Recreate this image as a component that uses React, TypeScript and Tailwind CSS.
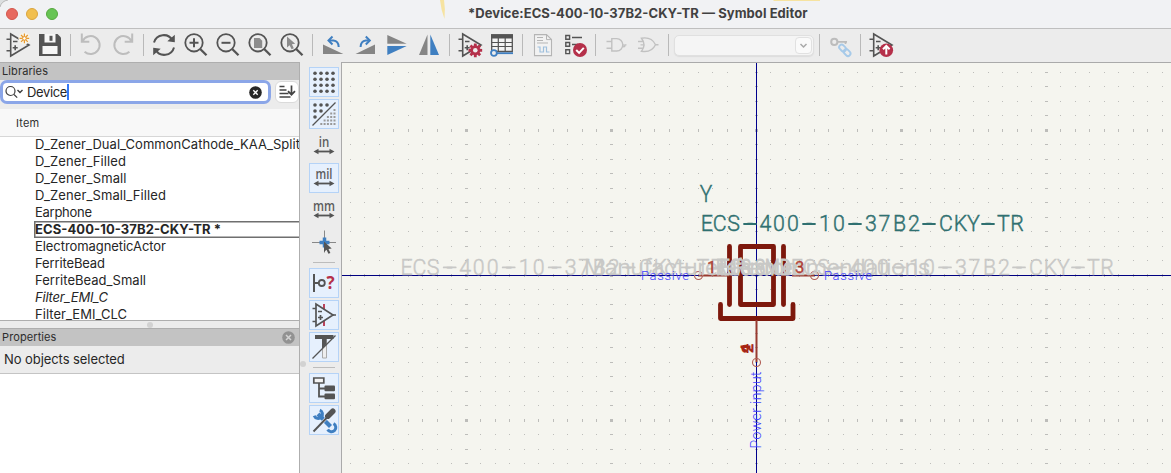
import React from "react";

type Kids = { children?: React.ReactNode };

const DARK = "#545454";
const BLUE = "#3f7fc1";
const RED = "#b5304a";
const UI = "font-['Inter','Liberation_Sans',sans-serif]";

function Tool({ children }: Kids) {
  return (
    <svg className="h-8 w-8 shrink-0" viewBox="0 0 32 32" fill="none">
      {children}
    </svg>
  );
}

function Sep() {
  return (
    <div className="flex w-[9px] shrink-0 justify-center">
      <div className="h-[22px] w-px bg-[#b9b9b9]" />
    </div>
  );
}

function OpAmp() {
  return (
    <g stroke={DARK} strokeWidth="1.6">
      <path d="M8.7 5v22L27 16Z" />
      <path d="M4.5 10.3h4M4.5 21.7h4M11 12.5h4.5M10.7 18.7h5M13.2 16.2v5" />
    </g>
  );
}

function Magnifier({ children }: Kids) {
  return (
    <Tool>
      {children}
      <circle cx="14" cy="13.8" r="8.7" stroke={DARK} strokeWidth="1.8" />
      <path d="M20.2 20l6.3 6.3" stroke={DARK} strokeWidth="2.3" />
    </Tool>
  );
}

function gearPath(cx: number, cy: number) {
  const pts: string[] = [];
  for (let i = 0; i < 8; i++) {
    const a = (i * Math.PI) / 4;
    [[-0.3, 5], [-0.2, 7], [0.2, 7], [0.3, 5]].forEach(([d, r]) =>
      pts.push(`${(cx + r * Math.cos(a + d)).toFixed(2)},${(cy + r * Math.sin(a + d)).toFixed(2)}`)
    );
  }
  return "M" + pts.join("L") + "Z";
}

function Toolbar() {
  return (
    <div className="flex h-[33px] items-start pl-[2px]">
      <div className="flex h-8 items-center">
        <Tool>
          <OpAmp />
          <circle cx="22.4" cy="9.4" r="6" fill="#f6f3ea" />
          <path d="M22.4 4.6v9.6M17.6 9.4h9.6M19 6l6.8 6.8M25.8 6L19 12.8" stroke="#e89a2e" strokeWidth="1.2" />
          <circle cx="22.4" cy="9.4" r="1.8" fill="#fff" stroke="#e89a2e" />
        </Tool>
        <Tool>
          <path d="M5 5h18.5L27 8.500V27H5Z" fill={DARK} />
          <path d="M10.500 5h11v8.500h-11ZM8.500 17h15v8h-15Z" fill="#f6f6f6" />
          <path d="M15.500 6.800h3v5h-3Z" fill={DARK} />
        </Tool>
        <Sep />
        <Tool>
          <path d="M6.800 4.500v8.200h7.500M7.500 12.200A9 9 0 1 1 9.600 22.700" stroke="#bdbdbd" strokeWidth="2" />
        </Tool>
        <Tool>
          <path d="M25.200 4.500v8.200h-7.500M24.500 12.200A9 9 0 1 0 22.400 22.700" stroke="#bdbdbd" strokeWidth="2" />
        </Tool>
        <Sep />
        <Tool>
          <path d="M6 13.500A10 10 0 0 1 24.500 11.500M26 18.500A10 10 0 0 1 7.500 20.500" stroke={DARK} strokeWidth="2" />
          <path d="M26.800 5.800v7.500l-7.500-1ZM5.200 26.200v-7.500l7.500 1Z" fill={DARK} />
        </Tool>
        <Magnifier>
          <path d="M9.500 13.800h9M14 9.300v9" stroke={DARK} strokeWidth="2" />
        </Magnifier>
        <Magnifier>
          <path d="M9.500 13.800h9" stroke={DARK} strokeWidth="2" />
        </Magnifier>
        <Magnifier>
          <path d="M10 9h5.500l2.700 2.700V19H10Z" fill="#8c8c8c" />
        </Magnifier>
        <Magnifier>
          <path d="M11 7.500v11l2.600-2.300 2 4 2.200-1-1.900-3.900 3.300-.5Z" fill="#8c8c8c" />
        </Magnifier>
        <Sep />
        <Tool>
          <path d="M6 15.500V25h20.300Z" fill="#858585" />
          <path d="M12.500 11.500h4q5 .5 5.200 6.500" stroke={BLUE} strokeWidth="2" />
          <path d="M15.500 7.500l-4 4 4 4" stroke={BLUE} strokeWidth="2" />
        </Tool>
        <Tool>
          <path d="M26 15.500V25H6.500Z" fill="#858585" />
          <path d="M19.800 11.500h-3q-5 .5-5.200 6.500" stroke={BLUE} strokeWidth="2" />
          <path d="M16.800 7.500l4 4-4 4" stroke={BLUE} strokeWidth="2" />
        </Tool>
        <Tool>
          <path d="M6.300 6v8.700h19.400Z" fill="#858585" />
          <path d="M6.300 17h19.400L6.300 26Z" fill={BLUE} />
        </Tool>
        <Tool>
          <path d="M14.500 5.500V26H6Z" fill="#858585" />
          <path d="M17.300 5.500V26H26Z" fill={BLUE} />
        </Tool>
        <Sep />
        <Tool>
          <OpAmp />
          <path d={gearPath(21.3, 21.3)} fill={RED} />
          <circle cx="21.3" cy="21.3" r="2.300" fill="#ececec" />
        </Tool>
        <Tool>
          <path d="M5.700 6h20.600v16.500H5.700Z" fill="#f4f4f4" stroke={DARK} strokeWidth="1.300" />
          <path d="M5 5.300h22V9.500H5Z" fill={DARK} />
          <path d="M5.700 13.500h20.600M5.700 17.500h20.600M12.300 9v13M19.200 9v13" stroke={DARK} strokeWidth="1.200" />
          <path d="M10 24.200h17" stroke={BLUE} strokeWidth="1.800" />
          <circle cx="7.900" cy="24" r="2.900" fill="#ececec" stroke={BLUE} strokeWidth="1.800" />
        </Tool>
        <Sep />
        <Tool>
          <path d="M7.500 5.600h12l5 5v16h-17Z" fill="#f2f2f2" stroke="#b5b5b5" strokeWidth="1.100" />
          <path d="M19.500 5.600v5h5M10 8.500h6M10 11.500h6M10 14h11" stroke="#b5b5b5" />
          <path d="M10.500 18h2.500v5h3.500v-5h3v5h3" stroke="#9fc0dd" strokeWidth="1.200" />
        </Tool>
        <Tool>
          <g stroke={DARK} strokeWidth="1.400">
            <path d="M6.800 6.500h3.800v3.800H6.800ZM6.800 13.500h3.800v3.800H6.800ZM6.800 20.800h3.800v3.800H6.800ZM13 8.500h10M13 15.500h6" />
          </g>
          <circle cx="21" cy="21" r="7" fill={RED} />
          <path d="M17.200 21l2.900 2.900 4.700-5" stroke="#fff" strokeWidth="2" />
        </Tool>
        <Sep />
        <Tool>
          <path d="M11.800 9.600h5a6 6.200 0 0 1 0 12.400h-5ZM6.500 12.500h5.300M6.500 19.300h5.300M23.800 15.900a1 1 0 1 0 .1 0M25 15.900h1.500" stroke="#c1c1c1" strokeWidth="1.400" />
        </Tool>
        <Tool>
          <path d="M9.500 9.200q10-1.700 14 6.500q-4 8.300-14 6.500q5-6.500 0-13ZM6 12.500h5.500M6 19.300h5.500M8.500 15.900h4M23.500 15.800h3" stroke="#c1c1c1" strokeWidth="1.400" />
        </Tool>
        <Sep />
        <div className="flex w-[142px] shrink-0 justify-center">
          <div className="flex h-[21px] w-[140px] items-center justify-end rounded-[5px] border border-[#e0e0e0] bg-[#f5f5f5] pr-px shadow-[0_1px_1px_#dddddd]">
            <div className="flex h-[17px] w-[17px] items-center justify-center rounded-[4px] border border-[#e1e1e1] bg-[#fafafa]">
              <svg className="h-[9px] w-[9px]" viewBox="0 0 9 9" fill="none">
                <path d="M1.500 3l3 3 3-3" stroke="#a9a9a9" strokeWidth="1.500" />
              </svg>
            </div>
          </div>
        </div>
        <Sep />
        <Tool>
          <circle cx="10.300" cy="12.900" r="3.100" stroke="#bcbcbc" strokeWidth="2" />
          <path d="M13.500 12.900h9.500M21.500 12v3" stroke="#bcbcbc" strokeWidth="1.700" />
          <g stroke="#a7cae9" strokeWidth="1.900" transform="rotate(45 21 21.500)">
            <rect x="13.800" y="19" width="7.500" height="5" rx="2.500" />
            <rect x="20.200" y="19" width="7.500" height="5" rx="2.500" />
          </g>
        </Tool>
        <Sep />
        <Tool>
          <OpAmp />
          <circle cx="21.300" cy="21.200" r="6.800" fill={RED} />
          <path d="M21.300 25.500v-8M18 20.300l3.300-3.300 3.300 3.300" stroke="#fff" strokeWidth="2" />
        </Tool>
      </div>
    </div>
  );
}

function TitleBar() {
  return (
    <div className="relative flex h-[29px] items-center border-b border-[#bfbfbf] bg-[#f1f2f4] pl-[6px]">
      <svg className="absolute left-0 top-0 h-[9px] w-[9px]" viewBox="0 0 9 9" fill="none">
        <path d="M0 0h8Q1.500 1 0 7Z" fill="#dcdfe0" />
        <path d="M0 7Q1.500 1 8 0" stroke="#b9b9b9" />
      </svg>
      <svg className="absolute left-[436px] top-0 h-5 w-[390px]" viewBox="0 0 390 20">
        <path d="M4 0h4q1.500 9 .5 19Q5 10 4 0Z" fill="#f6e3a0" />
        <path d="M337 0h47v1h-46Z" fill="#f6e3a0" />
      </svg>
      <div className="flex gap-2">
        <div className="h-3 w-3 rounded-full border border-[#d3574c] bg-[#e7695f]" />
        <div className="h-3 w-3 rounded-full border border-[#dba53e] bg-[#f1bf4f]" />
        <div className="h-3 w-3 rounded-full border border-[#57a83f] bg-[#67c454]" />
      </div>
      <svg className="absolute left-[460px] top-0 h-7 w-[360px]" viewBox="0 0 360 28">
        <text x="8" y="18" textLength="339.500" fontSize="13" fontWeight="700" fill="#414141" className={UI}>
          *Device:ECS-400-10-37B2-CKY-TR — Symbol Editor
        </text>
      </svg>
    </div>
  );
}

type Row = { name: string; w: number; look?: "bold" | "italic" };
const rows: Row[] = [
  { name: "D_Zener_Dual_CommonCathode_KAA_Split", w: 265 },
  { name: "D_Zener_Filled", w: 91 },
  { name: "D_Zener_Small", w: 91.5 },
  { name: "D_Zener_Small_Filled", w: 131 },
  { name: "Earphone", w: 57 },
  { name: "ECS-400-10-37B2-CKY-TR *", w: 186, look: "bold" },
  { name: "ElectromagneticActor", w: 131 },
  { name: "FerriteBead", w: 70 },
  { name: "FerriteBead_Small", w: 111 },
  { name: "Filter_EMI_C", w: 73, look: "italic" },
  { name: "Filter_EMI_CLC", w: 92 },
];

function Libraries() {
  return (
    <div className="flex h-[258px] flex-col overflow-hidden border-b border-[#aeaeae]">
      <div className="flex h-[17px] shrink-0 items-center bg-[#c3c3c3] pl-[2px] text-[11px] tracking-[0.1px] text-[#2d2d2d]">
        Libraries
      </div>
      <div className="flex h-[29px] shrink-0 items-start bg-[#ececec]">
        <div className="flex h-[24px] w-[271px] items-center rounded-[7px] border-[3px] border-[#8ba6e8] bg-white pl-[2px] pr-[6px]">
          <svg className="h-4 w-[22px]" viewBox="0 0 22 16" fill="none" stroke="#3c3c3c" strokeWidth="1.200">
            <circle cx="5.500" cy="7" r="4.500" />
            <path d="M9 10.500l3.200 3.200" />
            <path d="M12.500 6l2.500 2.500L17.500 6" strokeWidth="1.400" />
          </svg>
          <span className="text-[13px] leading-4 tracking-[-0.35px] text-[#262626]">Device</span>
          <div className="h-4 w-[2px] bg-[#3478f6]" />
          <svg className="ml-auto h-[13px] w-[13px]" viewBox="0 0 13 13">
            <circle cx="6.500" cy="6.500" r="6.300" fill="#272727" />
            <path d="M4.300 4.300l4.400 4.400M8.700 4.300L4.300 8.700" stroke="#fff" strokeWidth="1.400" />
          </svg>
        </div>
        <div className="ml-1 mt-px flex h-[22px] w-6 items-center justify-center rounded-[6px] border border-[#dadada] bg-white">
          <svg className="h-[18px] w-[18px] shrink-0" viewBox="0 0 18 18" fill="none" stroke="#444" strokeWidth="1.700">
            <path d="M1.500 3.500h5M1.500 7h7M1.500 10.500h9M1.500 14h11M13.500 2.500v9M10 8.200l3.500 3.500 3.500-3.500" />
          </svg>
        </div>
      </div>
      <div className="flex h-[28px] shrink-0 items-center border-b border-[#d7d7d7] bg-[#f8f8f8] pl-4 pt-[2px] text-[11px] tracking-[0.200px] text-[#303030]">
        Item
      </div>
      <div className="flex h-[183px] shrink-0 flex-col overflow-hidden bg-white">
        {rows.map((r, i) => (
          <div
            key={r.name}
            className={
              r.look === "bold"
                ? "-mr-1 ml-[34px] flex h-[17px] shrink-0 items-center border border-[#6f6f6f] shadow-[inset_0_0_0_0.5px_#6f6f6f]"
                : i === 0
                  ? "ml-[35px] flex h-[16px] shrink-0 items-end"
                  : "ml-[35px] flex h-[17px] shrink-0 items-center"
            }
          >
            <svg className="h-[17px] w-[265px] shrink-0 overflow-visible">
              <text
                x="0"
                y="13"
                fontSize="13"
                textLength={r.w}
                fill="#262626"
                fontWeight={r.look === "bold" ? 700 : 400}
                fontStyle={r.look === "italic" ? "italic" : "normal"}
              >
                {r.name}
              </text>
            </svg>
          </div>
        ))}
      </div>
    </div>
  );
}

function Properties() {
  return (
    <div className="flex flex-1 flex-col border-t border-[#aeaeae]">
      <div className="flex h-[17px] items-center justify-between bg-[#c3c3c3] pl-[2px] pr-1 text-[11px] tracking-[0.100px] text-[#2d2d2d]">
        Properties
        <svg className="h-[13px] w-[13px]" viewBox="0 0 13 13">
          <circle cx="6.500" cy="6.500" r="6.300" fill="#929292" />
          <path d="M4 4l5 5M9 4L4 9" stroke="#d4d4d4" strokeWidth="1.500" />
        </svg>
      </div>
      <div className="flex h-[28px] items-center border-b border-[#c4c4c4] bg-[#ececec] pl-1 text-[13px] tracking-[-0.070px] text-[#262626]">
        No objects selected
      </div>
      <div className="flex-1 bg-white" />
    </div>
  );
}

function Side({ on, children }: Kids & { on?: boolean }) {
  return (
    <div className={on ? "h-[30px] w-[30px] border border-[#b5d3f7] bg-[#e6f0fd]" : "h-[30px] w-[30px] border border-transparent"}>
      <svg className="-ml-px -mt-px h-[30px] w-[30px]" viewBox="0 0 30 30" fill="none">
        {children}
      </svg>
    </div>
  );
}

function Unit({ label, w }: { label: string; w: number }) {
  return (
    <>
      <text x="15" y="15.500" textAnchor="middle" fontSize="14" fontWeight="600" textLength={w} lengthAdjust="spacingAndGlyphs" fill="#5c5c5c" className="font-['Open_Sans','Noto_Sans',sans-serif]">
        {label}
      </text>
      <path d="M7 20.500h16" stroke={DARK} strokeWidth="1.800" />
      <path d="M4.500 20.500l5-2.700v5.400ZM25.500 20.500l-5-2.700v5.400Z" fill={DARK} />
    </>
  );
}

function SideDivider() {
  return <div className="my-[3px] h-px w-[22px] bg-[#bcbcbc]" />;
}

const four = [0, 1, 2, 3];

function SideBar() {
  return (
    <div className="relative flex w-[41px] shrink-0 flex-col items-center gap-[2px] bg-[#ececec] pl-[7px] pt-[5px]">
      <div className="absolute left-0 top-[299px] h-[6px] w-[6px] rounded-full bg-[#d2d2d2]" />
      <Side on>
        {four.map((r) => four.map((c) => <circle key={`${r}${c}`} cx={6 + c * 6} cy={6.3 + r * 6} r="1.800" fill={DARK} />))}
      </Side>
      <Side on>
        {four.slice(0, 3).map((r) =>
          four.slice(0, 3 - r).map((c) => <circle key={`${r}${c}`} cx={6 + c * 6} cy={6 + r * 6} r="1.800" fill={DARK} />)
        )}
        {[0, 1, 2, 3, 4].map((r) =>
          Array.from({ length: r + 1 }, (_, c) => (
            <rect key={`s${r}${c}`} x={24.5 - c * 3.3} y={10 + r * 3.5} width="2" height="2" fill="#999" />
          ))
        )}
        <path d="M3.500 26.500L26.500 3.500" stroke={DARK} strokeWidth="1.200" />
      </Side>
      <Side><Unit label="in" w={10.5} /></Side>
      <Side on><Unit label="mil" w={17} /></Side>
      <Side><Unit label="mm" w={22} /></Side>
      <Side>
        <path d="M3 15.500h24M15.500 3.500v22" stroke="#888" />
        <path d="M10.500 15.500h10M15.500 10.500v10" stroke={BLUE} strokeWidth="3.500" />
        <path d="M15 14.500v10.500l2.500-2.200 1.900 4 2-.9-1.900-4 3.200-.4Z" fill={DARK} />
      </Side>
      <SideDivider />
      <Side on>
        <path d="M5 6v18M5 15h4.500" stroke={DARK} strokeWidth="2" />
        <circle cx="12.800" cy="15" r="3" stroke={DARK} strokeWidth="1.800" />
        <text x="17.500" y="21" fontSize="17" fontWeight="700" fill={RED} className="font-['Open_Sans','Noto_Sans',sans-serif]">?</text>
      </Side>
      <Side on>
        <path d="M15 4v22" stroke={RED} strokeWidth="1.800" />
        <path d="M7 4v22L24 15Z" fill="#e6f0fd" stroke={DARK} strokeWidth="1.700" />
        <path d="M3.500 8.500H7M3.500 21.500H7M23 15h4M9 11.500h4M9 17.500h5M11.500 15v5" stroke={DARK} strokeWidth="1.700" />
      </Side>
      <Side on>
        <path d="M13.500 7h4v19h-4Z" fill="#eee" stroke="#aaa" />
        <path d="M6 3h18.500v4H17.500v5L13 17V7H6Z" fill={DARK} />
        <path d="M3.500 26.500L26.500 3.500" stroke={DARK} strokeWidth="1.200" />
      </Side>
      <SideDivider />
      <Side on>
        <path d="M4.800 5h10v5h-10Z" fill="#f4f4f4" stroke={DARK} strokeWidth="1.700" />
        <path d="M10 10v13.500h7M10 15.500h7" stroke={DARK} strokeWidth="1.800" />
        <rect x="15.500" y="12.500" width="10.500" height="5.800" rx="1" fill={DARK} />
        <rect x="15.500" y="20.500" width="10.500" height="5.800" rx="1" fill={DARK} />
      </Side>
      <Side on>
        <path d="M9 9L21.500 21.500" stroke={BLUE} strokeWidth="4.200" />
        <path d="M10.800 5.200A4.300 4.300 0 1 1 5.200 10.800" stroke={BLUE} strokeWidth="3" />
        <path d="M19.500 25.300A4.300 4.300 0 1 1 25.300 19.500" stroke={BLUE} strokeWidth="3" transform="rotate(180 22 22)" />
        <path d="M18.500 12L4.500 26.500" stroke="#e6f0fd" strokeWidth="3.200" />
        <path d="M19 11.500L4.500 26.500" stroke={DARK} strokeWidth="1.900" />
        <path d="M18.800 11.200l5-5" stroke={DARK} strokeWidth="5.500" strokeLinecap="round" />
      </Side>
    </div>
  );
}

const OX = 342;
const OY = 63;
const PITCH = 14.5;
const NARROW = 0.93;
const PART = "ECS-400-10-37B2-CKY-TR";
const centres = [706.8, 719.8, 733.5, 750, 765.5, 779, 793, 809, 825, 839, 855, 871, 884.5, 899.5, 914, 929, 946, 960.5, 973.5, 988, 1003.3, 1017];

function PartText({ dx, base, color }: { dx: number; base: number; color: string }) {
  return (
    <g fill={color} stroke={color}>
      {PART.split("").map((ch, i) => (
        <React.Fragment key={i}>
          {ch === "-" && (
            <path d={`M${centres[i] + dx - 6} ${base - 7.3}h12`} strokeWidth="1.800" strokeLinecap="round" />
          )}
        </React.Fragment>
      ))}
      <text
        transform={`scale(${NARROW} 1)`}
        x={centres.map((c) => ((c + dx) / NARROW).toFixed(2)).join(" ")}
        y={base}
        textAnchor="middle"
        fontSize="23"
        fontWeight="300"
        strokeWidth=".45"
      >
        {PART}
      </text>
    </g>
  );
}

function Grid() {
  const marks: React.ReactNode[] = [];
  for (let i = -28; i <= 28; i++) {
    for (let j = -14; j <= 13; j++) {
      const x = Math.floor(756 + i * PITCH);
      const y = Math.floor(275 + j * PITCH);
      const mx = i % 10 === 0 ? 3 : 1;
      const my = j % 10 === 0 ? 3 : 1;
      marks.push(<rect key={`${i}_${j}`} x={x - (mx - 1) / 2} y={y - (my - 1) / 2} width={mx} height={my} />);
    }
  }
  return <g fill="#bdbdba">{marks}</g>;
}

function Canvas() {
  const W = "#7d180c";
  const G = "#c8c8c6";
  return (
    <div className="flex-1 overflow-hidden border-l border-t border-[#aaaaaa] bg-[#f5f5ef]">
      <svg className="block h-[410px] w-[829px] font-['Roboto',sans-serif]" viewBox={`${OX} ${OY} 829 410`} fill="none">
        <Grid />
        <rect x="756" y="63" width="1" height="410" fill="#00008c" />
        <rect x="342" y="275" width="829" height="1" fill="#000080" />
        <g stroke={W} strokeWidth="4.800" strokeLinecap="round" strokeLinejoin="round">
          <path d="M729.500 246.500v58M783.500 246.500v58M740.500 246.500h33v58h-33ZM720.500 304.500v14h72.500v-14" />
        </g>
        <g stroke="#983a30" strokeWidth="2">
          <path d="M698.500 275.500h31M792 275.500h22.500M756.500 320v42" />
        </g>
        <g stroke="#b05c53" strokeWidth="1.100">
          <circle cx="698.500" cy="275.500" r="4" />
          <circle cx="814.500" cy="275.500" r="4" />
          <circle cx="756.500" cy="362.500" r="4" />
        </g>
        <g fill="#a62413" stroke="#a62413" strokeWidth=".8" fontSize="16.500">
          <text transform="translate(753 353) rotate(-90)" fontSize="14" textLength="9" lengthAdjust="spacingAndGlyphs">2</text>
          <text transform="translate(750 353) rotate(-90)" fontSize="13" textLength="9" lengthAdjust="spacingAndGlyphs">4</text>
        </g>
        <PartText dx={-300.3} base={274.7} color={G} />
        <PartText dx={90} base={274.7} color={G} />
        <g fill={G} stroke={G} fontSize="22.500" fontWeight="300">
          <text x="584" y="274.700" textLength="346" lengthAdjust="spacingAndGlyphs" strokeWidth=".5">Manufacturer Recommendations</text>
          <text x="720" y="274.700" textLength="71" lengthAdjust="spacingAndGlyphs" strokeWidth="1.200">ECS SMD</text>
          <text x="716" y="274.700" textLength="76" lengthAdjust="spacingAndGlyphs" strokeWidth="1.200">Reference</text>
        </g>
        <g fill="#a62413" stroke="#a62413" strokeWidth=".3" fontSize="16.500" fillOpacity=".8">
          <text x="707" y="272.500">1</text>
          <text x="795" y="272.500">3</text>
        </g>
        <text x="706" y="202.300" textAnchor="middle" fontSize="23" fontWeight="300" fill="#2f7070" stroke="#2f7070" strokeWidth=".45" textLength="12.500" lengthAdjust="spacingAndGlyphs">Y</text>
        <PartText dx={0} base={231.3} color="#2f7070" />
        <g fill="#4040ff" fontSize="13" fontWeight="300">
          <text x="641" y="280" textLength="48">Passive</text>
          <text x="824" y="280" textLength="48">Passive</text>
          <text transform="translate(761 448.500) rotate(-90)" fontSize="14" textLength="77">Power input</text>
        </g>
      </svg>
    </div>
  );
}

export default function App() {
  return (
    <div className="flex h-[473px] w-[1171px] flex-col overflow-hidden bg-[#ececec] font-['Inter','Liberation_Sans',sans-serif]">
      <TitleBar />
      <Toolbar />
      <div className="flex min-h-0 flex-1">
        <div className="relative flex w-[300px] shrink-0 flex-col border-r border-t border-[#aeaeae] bg-[#ececec]">
          <Libraries />
          <div className="flex h-[7px] shrink-0 items-center justify-center">
            <div className="h-[6px] w-[6px] rounded-full bg-[#d2d2d2]" />
          </div>
          <Properties />
        </div>
        <SideBar />
        <Canvas />
      </div>
    </div>
  );
}
